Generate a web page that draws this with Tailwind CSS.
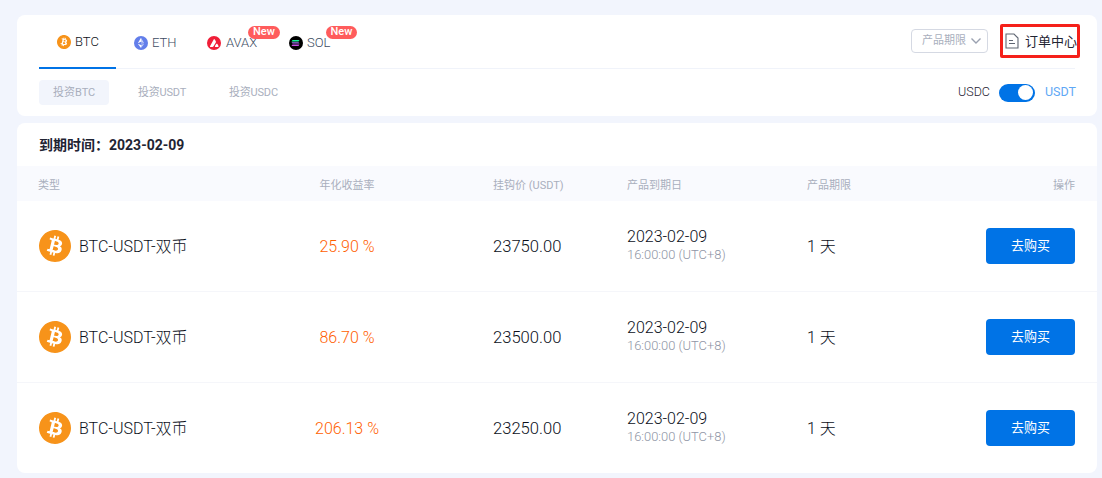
<!DOCTYPE html>
<html lang="zh">
<head>
<meta charset="utf-8">
<script src="https://cdn.jsdelivr.net/npm/@tailwindcss/browser@4"></script>
</head>
<body class="h-[478px] w-[1102px] overflow-hidden bg-[#f2f5fd] pl-[17px] pr-[5px] pt-[15px] font-['Roboto','Noto_Sans_CJK_SC',sans-serif] text-[#1f2433]">

<section class="h-[101px] rounded-lg bg-white px-[22px]">
  <div class="flex h-[54px] items-start justify-between border-b border-[#f0f3fa]">
    <nav class="flex h-[54px] text-[13px] font-light text-[#3c4b62]">
      <a class="flex h-[54px] w-[77px] items-center gap-1 border-b-2 border-[#0073e6] pl-[18px] pt-[2px] text-[#0f1320]">
        <svg class="h-[14px] w-[14px]" viewBox="0 0 24 24"><circle cx="12" cy="12" r="11" fill="#fff"/><path fill="#f7931a" d="M23.638 14.904c-1.602 6.43-8.113 10.34-14.542 8.736C2.67 22.05-1.244 15.525.362 9.105 1.962 2.67 8.475-1.243 14.9.358c6.43 1.605 10.342 8.115 8.738 14.548v-.002zm-6.35-4.613c.24-1.59-.974-2.45-2.64-3.03l.54-2.153-1.315-.33-.525 2.107c-.345-.087-.705-.167-1.064-.25l.526-2.127-1.32-.33-.54 2.165c-.285-.067-.565-.132-.84-.2l-1.815-.45-.35 1.407s.975.225.955.236c.535.136.63.486.615.766l-1.477 5.92c-.075.166-.24.406-.614.314.015.02-.96-.24-.96-.24l-.66 1.51 1.71.426.93.242-.54 2.19 1.32.327.54-2.17c.36.1.705.19 1.05.273l-.51 2.154 1.32.33.545-2.19c2.24.427 3.93.257 4.64-1.774.57-1.637-.03-2.58-1.217-3.196.854-.193 1.5-.76 1.68-1.93h.01zm-3.01 4.22c-.404 1.64-3.157.75-4.05.53l.72-2.9c.896.23 3.757.67 3.33 2.37zm.41-4.24c-.37 1.49-2.662.735-3.405.55l.654-2.64c.744.18 3.137.52 2.75 2.084v.006z"/></svg>
        <span>BTC</span>
      </a>
      <a class="flex h-[54px] w-[76px] items-center gap-1 pl-[18px] pt-[2px]">
        <svg class="h-[14px] w-[14px]" viewBox="0 0 14 14"><circle cx="7" cy="7" r="7" fill="#627eea"/><path fill="#fff" fill-opacity=".65" d="M7 1.800v3.900l3.200 1.500z"/><path fill="#fff" d="M7 1.800 3.800 7.200 7 5.700z"/><path fill="#fff" fill-opacity=".65" d="M7 9v3.100l3.200-4.400z"/><path fill="#fff" d="M7 12.100V9L3.800 7.700z"/><path fill="#fff" fill-opacity=".3" d="m7 8.400 3.200-1.200L7 5.700z"/></svg>
        <span>ETH</span>
      </a>
      <a class="relative flex h-[54px] w-[97px] items-center gap-[5px] pl-[15px] pt-[2px]">
        <svg class="h-[14px] w-[14px]" viewBox="0 0 14 14"><circle cx="7" cy="7" r="7" fill="#f01e38"/><path fill="#fff" d="M7 2.900c.3 0 .6.2.8.6l1 1.800c.2.4.2.8 0 1.100L6.400 10.600c-.2.300-.5.500-.9.500H3.700c-.6 0-.9-.500-.6-1zM9.200 8c.3-.5 1-.5 1.200 0l1 1.700c.3.600 0 1.400-.6 1.400H8.700c-.6 0-.9-.7-.6-1.300z"/></svg>
        <span>AVAX</span>
        <span class="absolute left-[56px] top-[11px] flex h-[13px] w-[32px] items-center justify-center rounded-[7px] bg-[#ff5c5c] text-[11px] font-medium text-white">New</span>
      </a>
      <a class="relative flex h-[54px] w-[60px] items-center gap-1 pt-[2px]">
        <svg class="h-[14px] w-[14px]" viewBox="0 0 14 14"><circle cx="7" cy="7" r="7" fill="#000"/><path fill="#14f195" d="M3.500 3.900h7l-1 1.500h-7z"/><path fill="#9b6fe8" d="M2.500 6.200h7l1 1.400h-7z"/><path fill="#c04fe0" d="M3.500 8.500h7l-1 1.500h-7z"/></svg>
        <span>SOL</span>
        <span class="absolute left-[37px] top-[11px] flex h-[13px] w-[31px] items-center justify-center rounded-[7px] bg-[#ff5c5c] text-[11px] font-medium text-white">New</span>
      </a>
    </nav>
    <div class="flex items-center pt-[9px]">
      <button class="mr-3 flex h-[24px] w-[77px] items-center justify-between rounded-[4px] border border-[#d5d9e3] pl-[10px] pr-[5px] text-[11px] text-[#a9afbd]">
        <span>产品期限</span>
        <svg class="h-[10px] w-[12px]" viewBox="0 0 12 10" fill="none" stroke="#9aa1b0" stroke-width="1.400"><path d="M1.500 2.500 6 7l4.500-4.500"/></svg>
      </button>
      <a class="-mr-[5px] flex h-[34px] w-[80px] items-center rounded-[2px] border-[3px] border-[#f5201a] pl-[2px] text-[13px] text-[#1f2433]">
        <svg class="h-[16px] w-[14px]" viewBox="0 0 14 16" fill="none" stroke="#5f6673" stroke-width="1.100"><path d="M1 1h8l4 4v10H1z"/><path d="M4 7.500h4M4 10.500h6"/></svg>
        <span class="ml-[6px] whitespace-nowrap pt-px">订单中心</span>
      </a>
    </div>
  </div>
  <div class="flex items-center justify-between pt-[11px]">
    <div class="flex gap-[15px] text-[11px] text-[#a9afbd]">
      <span class="flex h-[25px] w-[70px] items-center rounded bg-[#f2f5fc] pl-[14px] pt-px">投资BTC</span>
      <span class="flex h-[25px] w-[76px] items-center rounded pl-[14px] pt-px tracking-[-0.2px]">投资USDT</span>
      <span class="flex h-[25px] w-[78px] items-center rounded pl-[14px] pt-px tracking-[-0.2px]">投资USDC</span>
    </div>
    <div class="flex items-center text-[12.5px] font-light">
      <span>USDC</span>
      <span class="ml-[9px] flex h-[18px] w-[36px] items-center justify-end rounded-full bg-[#0073e6] pr-[2px]"><span class="h-[15px] w-[15px] rounded-full bg-white"></span></span>
      <span class="ml-[10px] w-[30px] whitespace-nowrap font-normal text-[#5fa8f5]">USDT</span>
    </div>
  </div>
</section>

<section class="mt-[7px] h-[350px] rounded-lg bg-white">
  <h2 class="flex h-[43px] items-center pl-[22px] pt-[2px] text-[14px] font-bold">到期时间：2023-02-09</h2>
  <div class="grid h-[35px] grid-cols-[162px_292px_134px_180px_1fr_90px] items-center bg-[#f9fafe] px-[22px] pt-[5px] text-[11px] text-[#a9afbd]">
    <span class="-ml-px">类型</span><span class="text-center">年化收益率</span><span>挂钩价 (USDT)</span><span>产品到期日</span><span>产品期限</span><span class="text-right">操作</span>
  </div>

  <div class="grid h-[91px] grid-cols-[162px_292px_134px_180px_1fr_90px] items-center border-b border-[#f5f6fa] px-[22px] text-[16px] font-light text-[#0b0f1a]">
    <div class="flex items-center gap-2">
      <svg class="h-8 w-8" viewBox="0 0 24 24"><circle cx="12" cy="12" r="11" fill="#fff"/><path fill="#f7931a" d="M23.638 14.904c-1.602 6.43-8.113 10.34-14.542 8.736C2.67 22.05-1.244 15.525.362 9.105 1.962 2.67 8.475-1.243 14.9.358c6.43 1.605 10.342 8.115 8.738 14.548v-.002zm-6.35-4.613c.24-1.59-.974-2.45-2.64-3.03l.54-2.153-1.315-.33-.525 2.107c-.345-.087-.705-.167-1.064-.25l.526-2.127-1.32-.33-.54 2.165c-.285-.067-.565-.132-.84-.2l-1.815-.45-.35 1.407s.975.225.955.236c.535.136.63.486.615.766l-1.477 5.92c-.075.166-.24.406-.614.314.015.02-.96-.24-.96-.24l-.66 1.51 1.71.426.93.242-.54 2.19 1.32.327.54-2.17c.36.1.705.19 1.05.273l-.51 2.154 1.32.33.545-2.19c2.24.427 3.93.257 4.64-1.774.57-1.637-.03-2.58-1.217-3.196.854-.193 1.5-.76 1.68-1.93h.01zm-3.01 4.22c-.404 1.64-3.157.75-4.05.53l.72-2.9c.896.23 3.757.67 3.33 2.37zm.41-4.24c-.37 1.49-2.662.735-3.405.55l.654-2.64c.744.18 3.137.52 2.75 2.084v.006z"/></svg>
      <span class="whitespace-nowrap pt-px">BTC-USDT-双币</span>
    </div>
    <span class="pt-[2px] text-center text-[#ff6000]">25.90 %</span>
    <span class="pt-[2px] text-[16.6px]">23750.00</span>
    <div class="leading-[18px]"><div>2023-02-09</div><div class="text-[12.9px] text-[#8f95a5]">16:00:00 (UTC+8)</div></div>
    <span class="pt-[2px]">1 天</span>
    <button class="flex h-9 w-[89px] items-center justify-center justify-self-end rounded bg-[#0073e6] text-[13px] font-normal text-white">去购买</button>
  </div>

  <div class="grid h-[91px] grid-cols-[162px_292px_134px_180px_1fr_90px] items-center border-b border-[#f5f6fa] px-[22px] text-[16px] font-light text-[#0b0f1a]">
    <div class="flex items-center gap-2">
      <svg class="h-8 w-8" viewBox="0 0 24 24"><circle cx="12" cy="12" r="11" fill="#fff"/><path fill="#f7931a" d="M23.638 14.904c-1.602 6.43-8.113 10.34-14.542 8.736C2.67 22.05-1.244 15.525.362 9.105 1.962 2.67 8.475-1.243 14.9.358c6.43 1.605 10.342 8.115 8.738 14.548v-.002zm-6.35-4.613c.24-1.59-.974-2.45-2.64-3.03l.54-2.153-1.315-.33-.525 2.107c-.345-.087-.705-.167-1.064-.25l.526-2.127-1.32-.33-.54 2.165c-.285-.067-.565-.132-.84-.2l-1.815-.45-.35 1.407s.975.225.955.236c.535.136.63.486.615.766l-1.477 5.92c-.075.166-.24.406-.614.314.015.02-.96-.24-.96-.24l-.66 1.51 1.71.426.93.242-.54 2.19 1.32.327.54-2.17c.36.1.705.19 1.05.273l-.51 2.154 1.32.33.545-2.19c2.24.427 3.93.257 4.64-1.774.57-1.637-.03-2.58-1.217-3.196.854-.193 1.5-.76 1.68-1.93h.01zm-3.01 4.22c-.404 1.64-3.157.75-4.05.53l.72-2.9c.896.23 3.757.67 3.33 2.37zm.41-4.24c-.37 1.49-2.662.735-3.405.55l.654-2.64c.744.18 3.137.52 2.75 2.084v.006z"/></svg>
      <span class="whitespace-nowrap pt-px">BTC-USDT-双币</span>
    </div>
    <span class="pt-[2px] text-center text-[#ff6000]">86.70 %</span>
    <span class="pt-[2px] text-[16.6px]">23500.00</span>
    <div class="leading-[18px]"><div>2023-02-09</div><div class="text-[12.9px] text-[#8f95a5]">16:00:00 (UTC+8)</div></div>
    <span class="pt-[2px]">1 天</span>
    <button class="flex h-9 w-[89px] items-center justify-center justify-self-end rounded bg-[#0073e6] text-[13px] font-normal text-white">去购买</button>
  </div>

  <div class="grid h-[90px] grid-cols-[162px_292px_134px_180px_1fr_90px] items-center px-[22px] text-[16px] font-light text-[#0b0f1a]">
    <div class="flex items-center gap-2">
      <svg class="h-8 w-8" viewBox="0 0 24 24"><circle cx="12" cy="12" r="11" fill="#fff"/><path fill="#f7931a" d="M23.638 14.904c-1.602 6.43-8.113 10.34-14.542 8.736C2.67 22.05-1.244 15.525.362 9.105 1.962 2.67 8.475-1.243 14.9.358c6.43 1.605 10.342 8.115 8.738 14.548v-.002zm-6.35-4.613c.24-1.59-.974-2.45-2.64-3.03l.54-2.153-1.315-.33-.525 2.107c-.345-.087-.705-.167-1.064-.25l.526-2.127-1.32-.33-.54 2.165c-.285-.067-.565-.132-.84-.2l-1.815-.45-.35 1.407s.975.225.955.236c.535.136.63.486.615.766l-1.477 5.92c-.075.166-.24.406-.614.314.015.02-.96-.24-.96-.24l-.66 1.51 1.71.426.93.242-.54 2.19 1.32.327.54-2.17c.36.1.705.19 1.05.273l-.51 2.154 1.32.33.545-2.19c2.24.427 3.93.257 4.64-1.774.57-1.637-.03-2.58-1.217-3.196.854-.193 1.5-.76 1.68-1.93h.01zm-3.01 4.22c-.404 1.64-3.157.75-4.05.53l.72-2.9c.896.23 3.757.67 3.33 2.37zm.41-4.24c-.37 1.49-2.662.735-3.405.55l.654-2.64c.744.18 3.137.52 2.75 2.084v.006z"/></svg>
      <span class="whitespace-nowrap pt-px">BTC-USDT-双币</span>
    </div>
    <span class="pt-[2px] text-center text-[#ff6000]">206.13 %</span>
    <span class="pt-[2px] text-[16.6px]">23250.00</span>
    <div class="leading-[18px]"><div>2023-02-09</div><div class="text-[12.9px] text-[#8f95a5]">16:00:00 (UTC+8)</div></div>
    <span class="pt-[2px]">1 天</span>
    <button class="flex h-9 w-[89px] items-center justify-center justify-self-end rounded bg-[#0073e6] text-[13px] font-normal text-white">去购买</button>
  </div>
</section>
</body>
</html>
